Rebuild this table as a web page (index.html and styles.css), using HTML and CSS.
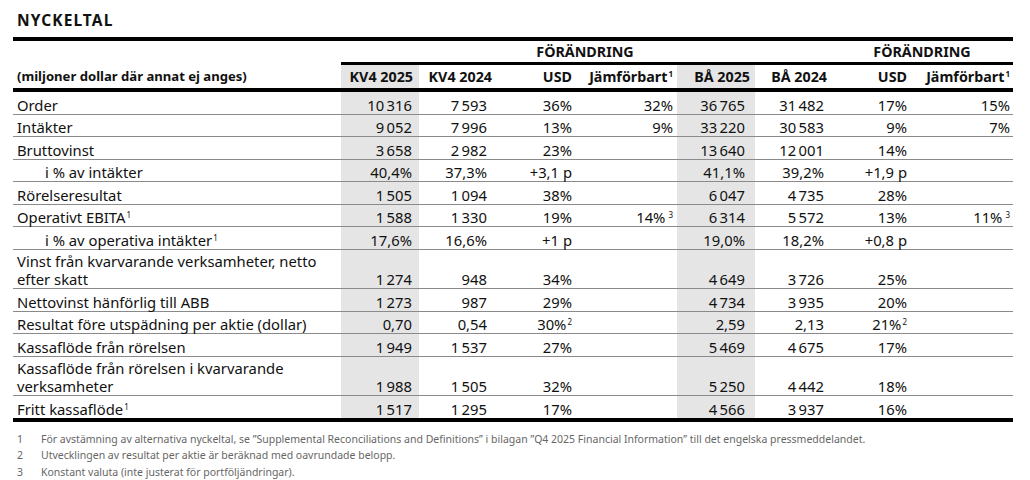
FILE: index.html
```html
<!DOCTYPE html>
<html lang="sv">
<head>
<meta charset="utf-8">
<title>Nyckeltal</title>
<link rel="stylesheet" href="styles.css">
</head>
<body>
<div class="page">
  <h1 class="title">NYCKELTAL</h1>
  <table class="kt">
    <colgroup>
      <col class="w-label"><col class="w-a"><col class="w-b"><col class="w-c"><col class="w-d"><col class="w-a"><col class="w-f"><col class="w-g"><col class="w-h">
    </colgroup>
    <thead>
      <tr class="hr1">
        <th class="blank-first"></th>
        <th colspan="2" class="grp"></th>
        <th colspan="2" class="grp">FÖRÄNDRING</th>
        <th colspan="2" class="grp"></th>
        <th colspan="2" class="grp">FÖRÄNDRING</th>
      </tr>
      <tr class="hr2">
        <th class="lbl">(miljoner dollar där annat ej anges)</th>
        <th class="hl">KV4 2025</th>
        <th>KV4 2024</th>
        <th>USD</th>
        <th>Jämförbart<sup>1</sup></th>
        <th class="hl">BÅ 2025</th>
        <th>BÅ 2024</th>
        <th>USD</th>
        <th>Jämförbart<sup>1</sup></th>
      </tr>
    </thead>
    <tbody>
      <tr><td>Order</td><td>10&#x2009;316</td><td>7&#x2009;593</td><td>36%</td><td>32%</td><td>36&#x2009;765</td><td>31&#x2009;482</td><td>17%</td><td>15%</td></tr>
      <tr><td>Intäkter</td><td>9&#x2009;052</td><td>7&#x2009;996</td><td>13%</td><td>9%</td><td>33&#x2009;220</td><td>30&#x2009;583</td><td>9%</td><td>7%</td></tr>
      <tr><td>Bruttovinst</td><td>3&#x2009;658</td><td>2&#x2009;982</td><td>23%</td><td></td><td>13&#x2009;640</td><td>12&#x2009;001</td><td>14%</td><td></td></tr>
      <tr><td class="ind">i % av intäkter</td><td>40,4%</td><td>37,3%</td><td>+3,1 p</td><td></td><td>41,1%</td><td>39,2%</td><td>+1,9 p</td><td></td></tr>
      <tr><td>Rörelseresultat</td><td>1&#x2009;505</td><td>1&#x2009;094</td><td>38%</td><td></td><td>6&#x2009;047</td><td>4&#x2009;735</td><td>28%</td><td></td></tr>
      <tr><td>Operativt EBITA<sup>1</sup></td><td>1&#x2009;588</td><td>1&#x2009;330</td><td>19%</td><td>14%<sup class="gap">3</sup></td><td>6&#x2009;314</td><td>5&#x2009;572</td><td>13%</td><td>11%<sup class="gap">3</sup></td></tr>
      <tr><td class="ind">i % av operativa intäkter<sup>1</sup></td><td>17,6%</td><td>16,6%</td><td>+1 p</td><td></td><td>19,0%</td><td>18,2%</td><td>+0,8 p</td><td></td></tr>
      <tr class="two"><td>Vinst från kvarvarande verksamheter, netto<br>efter skatt</td><td>1&#x2009;274</td><td>948</td><td>34%</td><td></td><td>4&#x2009;649</td><td>3&#x2009;726</td><td>25%</td><td></td></tr>
      <tr><td>Nettovinst hänförlig till ABB</td><td>1&#x2009;273</td><td>987</td><td>29%</td><td></td><td>4&#x2009;734</td><td>3&#x2009;935</td><td>20%</td><td></td></tr>
      <tr><td>Resultat före utspädning per aktie (dollar)</td><td>0,70</td><td>0,54</td><td>30%<sup>2</sup></td><td></td><td>2,59</td><td>2,13</td><td>21%<sup>2</sup></td><td></td></tr>
      <tr><td>Kassaflöde från rörelsen</td><td>1&#x2009;949</td><td>1&#x2009;537</td><td>27%</td><td></td><td>5&#x2009;469</td><td>4&#x2009;675</td><td>17%</td><td></td></tr>
      <tr class="two"><td>Kassaflöde från rörelsen i kvarvarande<br>verksamheter</td><td>1&#x2009;988</td><td>1&#x2009;505</td><td>32%</td><td></td><td>5&#x2009;250</td><td>4&#x2009;442</td><td>18%</td><td></td></tr>
      <tr class="last"><td>Fritt kassaflöde<sup>1</sup></td><td>1&#x2009;517</td><td>1&#x2009;295</td><td>17%</td><td></td><td>4&#x2009;566</td><td>3&#x2009;937</td><td>16%</td><td></td></tr>
    </tbody>
  </table>
  <ol class="notes">
    <li><span class="num">1</span><span>För avstämning av alternativa nyckeltal, se ”Supplemental Reconciliations and Definitions” i bilagan ”Q4 2025 Financial Information” till det engelska pressmeddelandet.</span></li>
    <li><span class="num">2</span><span>Utvecklingen av resultat per aktie är beräknad med oavrundade belopp.</span></li>
    <li><span class="num">3</span><span>Konstant valuta (inte justerat för portföljändringar).</span></li>
  </ol>
</div>
</body>
</html>
```
FILE: styles.css
```css
html, body {
  margin: 0;
  padding: 0;
  background: #fff;
}
body {
  font-family: "Noto Sans", "Open Sans", sans-serif;
  color: #111;
}
.page {
  padding: 0 0 0 13px;
  width: 1000px;
}
.title {
  margin: 0;
  padding: 11px 0 0 4px;
  height: 27px;
  box-sizing: border-box;
  font-size: 15.5px;
  font-weight: 700;
  line-height: 18px;
  letter-spacing: 1.1px;
}
.kt {
  width: 1000px;
  border-collapse: separate;
  border-spacing: 0;
  table-layout: fixed;
  margin-top: 10px;
  border-top: 4px solid #000;
  border-bottom: 4px solid #000;
  font-size: 14.8px;
}
.w-label { width: 328px; }
.w-a { width: 78px; }
.w-b { width: 74px; }
.w-c { width: 85px; }
.w-d { width: 99px; }
.w-f { width: 76px; }
.w-g { width: 82px; }
.w-h { width: 100px; }

.kt th {
  font-weight: 700;
  font-size: 14.3px;
  text-align: right;
  vertical-align: bottom;
  white-space: nowrap;
  line-height: 17px;
}
.hr1 th {
  padding: 2px 0 2px;
}
.hr1 th.grp {
  border-bottom: 3px solid #000;
  text-align: center;
}
.hr2 th {
  padding: 3px 6px 3px 0;
  border-bottom: 4px solid #000;
}
.hr2 th.lbl {
  text-align: left;
  padding-left: 4px;
  font-size: 13.1px;
}
.hr2 th:nth-child(3) { padding-right: 1px; }
.hr2 th:nth-child(5) { padding-right: 4px; }
.hr2 th:nth-child(6) { padding-right: 5px; }
.hr2 th:nth-child(7) { padding-right: 4px; }
.hr2 th:nth-child(9) { padding-right: 3px; }
.hl, .kt td:nth-child(2), .kt td:nth-child(6) {
  background: #e5e5e6;
}
.kt td {
  text-align: right;
  vertical-align: bottom;
  line-height: 17px;
  padding: 4.5px 6px 0 0;
  border-bottom: 1px solid #8a8a8a;
  white-space: nowrap;
}
.kt tr.two td {
  line-height: 18px;
  padding-top: 2.5px;
}
.kt tr.last td { border-bottom: none; }
.kt td:first-child {
  text-align: left;
  padding-left: 4px;
}
.kt td.ind { padding-left: 32px; }
.kt td:nth-child(2) { padding-right: 7px; }
.kt td:nth-child(5) { padding-right: 4px; }
.kt td:nth-child(6) { padding-right: 10px; }
.kt td:nth-child(7) { padding-right: 7px; }
.kt td:nth-child(9) { padding-right: 3px; }
sup {
  font-size: 8px;
  font-weight: 400;
  line-height: 0;
  vertical-align: 5px;
  margin-left: 1px;
}
.kt th sup { font-weight: 700; }
sup.gap { margin-left: 3px; }
.notes {
  list-style: none;
  margin: 9px 0 0;
  padding: 0 0 0 4px;
  font-size: 10.5px;
  line-height: 16.5px;
  color: #666;
}
.notes li {
  display: flex;
}
.notes .num {
  width: 24px;
  flex: none;
}
```
